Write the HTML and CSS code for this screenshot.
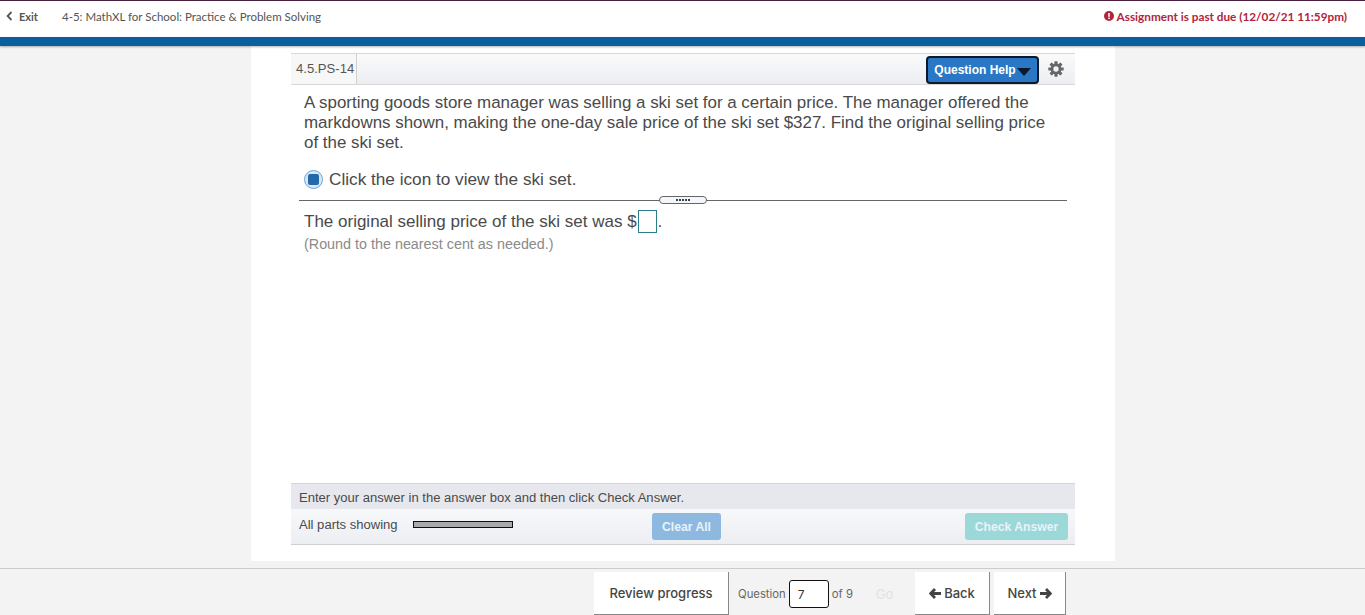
FILE: index.html
```html
<!DOCTYPE html>
<html lang="en">
<head>
    <meta charset="UTF-8">
    <meta name="viewport" content="width=device-width, initial-scale=1.0">
    <title>4-5: MathXL for School: Practice &amp; Problem Solving</title>
    <link rel="stylesheet" href="styles.css">
</head>
<body>
    <!-- Top bar -->
    <header class="topbar">
        <div class="exit">
            <svg class="chevron" width="7" height="10" viewBox="0 0 7 10"><path d="M5.5 1 1.6 5l3.9 4" fill="none" stroke="#555" stroke-width="1.8"/></svg>
            <span>Exit</span>
        </div>
        <div class="assignment">4-5: MathXL for School: Practice &amp; Problem Solving</div>
        <div class="past-due">
            <svg width="10" height="10" viewBox="0 0 10 10"><circle cx="5" cy="5" r="5" fill="#b3243c"/><rect x="4.2" y="2" width="1.6" height="3.8" fill="#fff"/><rect x="4.2" y="6.6" width="1.6" height="1.5" fill="#fff"/></svg>
            <span>Assignment is past due (12/02/21 11:59pm)</span>
        </div>
    </header>
    <div class="bluebar"></div>

    <main class="sheet">
        <div class="player">
            <div class="titlebar">
                <div class="qid">4.5.PS-14</div>
                <button class="help">Question Help<span class="caret"></span></button>
                <svg class="gear" width="16" height="16" viewBox="0 0 16 16">
                    <g fill="#666">
                        <circle cx="8" cy="8" r="5.4"/>
                        <rect x="6.4" y="0.3" width="3.2" height="15.4" rx="0.6"/>
                        <rect x="6.4" y="0.3" width="3.2" height="15.4" rx="0.6" transform="rotate(45 8 8)"/>
                        <rect x="6.4" y="0.3" width="3.2" height="15.4" rx="0.6" transform="rotate(90 8 8)"/>
                        <rect x="6.4" y="0.3" width="3.2" height="15.4" rx="0.6" transform="rotate(135 8 8)"/>
                    </g>
                    <circle cx="8" cy="8" r="2.7" fill="#f2f3f6"/>
                </svg>
            </div>

            <div class="question">
                <p class="stem">A sporting goods store manager was selling a ski set for a certain price. The manager offered the markdowns shown, making the one-day sale price of the ski set $327. Find the original selling price of the ski set.</p>
                <div class="icon-line">
                    <span class="media-icon"><span></span></span>
                    <span>Click the icon to view the ski set.</span>
                </div>
            </div>

            <div class="divider"><span class="grip"><span class="dots"></span></span></div>

            <div class="answer">
                <div class="answer-line">The original selling price of the ski set was $<span class="answer-box"></span>.</div>
                <div class="hint">(Round to the nearest cent as needed.)</div>
            </div>

            <div class="instruction">Enter your answer in the answer box and then click Check Answer.</div>
            <div class="actions">
                <span class="parts">All parts showing</span>
                <span class="progress"></span>
                <button class="clear">Clear All</button>
                <button class="check">Check Answer</button>
            </div>
        </div>
    </main>

    <!-- Footer nav -->
    <footer class="footer">
        <button class="nav review">Review progress</button>
        <div class="jump">
            <span>Question</span>
            <span class="jump-box">7</span>
            <span>of 9</span>
        </div>
        <button class="nav go">Go</button>
        <button class="nav back">
            <svg width="12" height="11" viewBox="0 0 12 11"><path d="M6 1 1.6 5.5 6 10M2 5.5H12" fill="none" stroke="#444" stroke-width="2.8"/></svg>Back
        </button>
        <button class="nav next">
            Next<svg width="12" height="11" viewBox="0 0 12 11"><path d="M6 1l4.4 4.5L6 10M10 5.5H0" fill="none" stroke="#444" stroke-width="2.8"/></svg>
        </button>
    </footer>
</body>
</html>
```

FILE: styles.css
```css
* {
    box-sizing: border-box;
    margin: 0;
    padding: 0;
}

html, body {
    height: 615px;
    overflow: hidden;
}

body {
    background: #f3f3f3;
    font-family: 'Liberation Sans', Arial, sans-serif;
    color: #4a4a4a;
    display: flex;
    flex-direction: column;
}

button {
    font-family: inherit;
    border: none;
}

/* top bar */
.topbar {
    height: 37px;
    background: #fff;
    border-top: 1px solid #4a1f3f;
    display: flex;
    align-items: center;
    padding: 0 18px 6px 6px;
    font-family: Lato, sans-serif;
    font-size: 11.5px;
}

.exit {
    display: flex;
    align-items: center;
    gap: 6px;
    width: 56px;
    font-weight: 700;
    color: #555;
    font-size: 11px;
}

.assignment {
    color: #555;
    flex: 1;
}

.past-due {
    display: flex;
    align-items: center;
    gap: 3px;
    color: #b3243c;
    font-weight: 700;
    font-size: 11.75px;
}

.bluebar {
    height: 9px;
    background: #0a5f9e;
    box-shadow: 0 1px 2px rgba(0, 0, 0, 0.3);
    position: relative;
}

/* main white sheet */
.sheet {
    width: 864px;
    height: 515px;
    margin-left: 251px;
    background: #fff;
    padding: 7px 40px 0;
}

.player {
    height: 492px;
    display: flex;
    flex-direction: column;
}

.titlebar {
    height: 32px;
    display: flex;
    align-items: center;
    border-top: 1px solid #d8d8d8;
    border-bottom: 1px solid #d8d8d8;
    background: linear-gradient(#fafafb, #eceef2);
}

.qid {
    height: 100%;
    padding: 0 2px 0 5px;
    border-right: 1px solid #d0d0d0;
    font-size: 13.1px;
    line-height: 29px;
    color: #555;
    background: #f7f7f8;
}

.help {
    margin: 1px 0 0 auto;
    width: 113px;
    height: 28px;
    padding-top: 1px;
    background: #2a78c5;
    border: 2px solid #0b1a2b;
    border-radius: 4px;
    color: #fff;
    font-size: 12px;
    font-weight: 700;
    display: flex;
    align-items: center;
    justify-content: center;
    white-space: nowrap;
}

.caret {
    margin: 3px 0 0 1px;
    border-left: 7px solid transparent;
    border-right: 7px solid transparent;
    border-top: 8px solid #0b1a2b;
}

.gear {
    margin: 0 11px 0 9px;
}

.question {
    padding: 8px 13px 0;
    font-size: 16.93px;
    line-height: 20px;
}

.icon-line {
    display: flex;
    align-items: center;
    gap: 6px;
    margin-top: 16px;
    font-size: 17.2px;
}

.media-icon {
    width: 19px;
    height: 19px;
    margin-top: 1px;
    border-radius: 50%;
    background: #dbe8f3;
    border: 1px solid #6fa5d0;
    display: flex;
    align-items: center;
    justify-content: center;
}

.media-icon span {
    width: 11px;
    height: 11px;
    border-radius: 2px;
    background: #2468ab;
}

.divider {
    margin: 11px 8px 0;
    height: 1px;
    background: #666;
    position: relative;
}

.grip {
    position: absolute;
    left: 360px;
    top: -4px;
    width: 48px;
    height: 8px;
    background: #f4f6fa;
    border: 1px solid #666;
    border-radius: 4px;
    display: flex;
    align-items: center;
    justify-content: center;
}

.dots {
    width: 14px;
    height: 2px;
    background: repeating-linear-gradient(90deg, #345 0 2px, transparent 2px 3px);
}

.answer {
    padding: 9px 13px 0;
    flex: 1;
}

.answer-line {
    font-size: 17px;
    line-height: 23px;
    display: flex;
    align-items: center;
}

.answer-box {
    width: 19px;
    height: 23px;
    border: 1px solid #2b7f8c;
    margin-left: 1px;
    margin-right: 1px;
}

.hint {
    margin-top: 2px;
    font-size: 14.35px;
    line-height: 18px;
    color: #8a8a8a;
}

.instruction {
    height: 26px;
    background: #e6e8ee;
    border-top: 1px solid #d4d4d4;
    padding-left: 8px;
    font-size: 13.05px;
    line-height: 27px;
}

.actions {
    height: 36px;
    display: flex;
    align-items: center;
    padding: 0 7px 0 8px;
    background: linear-gradient(#f7f8fa, #eceef2);
    border-bottom: 1px solid #cfcfcf;
    font-size: 13.05px;
}

.parts {
    width: 114px;
    margin-top: -5px;
}

.progress {
    width: 100px;
    height: 7px;
    margin-top: -4px;
    background: #aaa;
    border: 1px solid #111;
}

.clear, .check {
    height: 27px;
    border-radius: 3px;
    color: #e9f2fa;
    font-size: 12.2px;
    font-weight: 700;
}

.clear {
    width: 69px;
    margin-left: 139px;
    background: #8db8e0;
}

.check {
    width: 103px;
    margin-left: auto;
    background: #9bd8d8;
}

/* footer */
.footer {
    margin-top: 7px;
    height: 47px;
    border-top: 1px solid #ccc;
    display: flex;
    align-items: flex-start;
    padding: 3px 0 0 594px;
    font-family: Inter, sans-serif;
    font-size: 13px;
    color: #444;
}

.nav {
    height: 43px;
    background: #fff;
    border-bottom: 1px solid #888;
    border-right: 1px solid #888;
    font-weight: 500;
    font-size: 13px;
    color: #444;
    display: flex;
    align-items: center;
    justify-content: center;
    gap: 3px;
}

.review {
    width: 135px;
}

.jump {
    width: 134px;
    height: 43px;
    display: flex;
    align-items: center;
    padding-left: 9px;
    gap: 3px;
    font-size: 11.3px;
    color: #666;
}

.jump-box {
    width: 40px;
    height: 28px;
    background: #fff;
    border: 1px solid #111;
    border-radius: 3px;
    padding-left: 8px;
    line-height: 27px;
    font-size: 12px;
    color: #333;
}

.go {
    width: 45px;
    margin-left: -1px;
    background: #f3f3f3;
    color: #e2e2e2;
    font-weight: 400;
    border: none;
}

.back {
    width: 75px;
    margin-left: 8px;
}

.next {
    width: 72px;
    margin-left: 4px;
}
```
